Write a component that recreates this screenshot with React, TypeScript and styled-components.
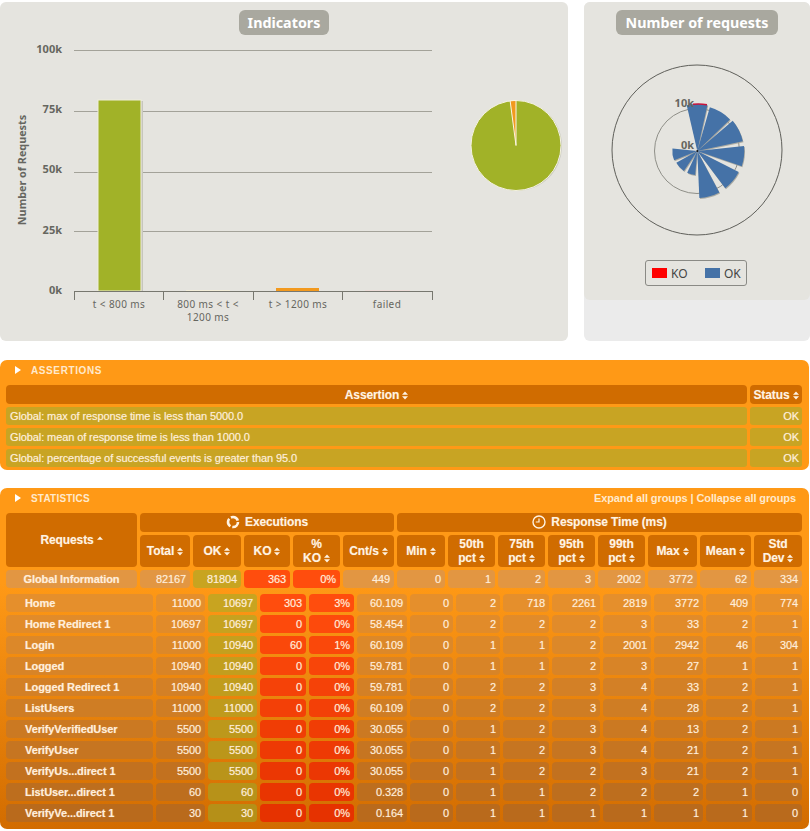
import React from 'react';
import styled, { createGlobalStyle } from 'styled-components';

const GlobalStyle = createGlobalStyle`
  html, body {
    margin: 0;
    background: #ffffff;
    font-family: 'Liberation Sans', Arial, sans-serif;
  }
`;

const Page = styled.div`
  width: 810px;
  height: 831px;
  padding-top: 2px;
  box-sizing: border-box;
  overflow: hidden;
`;

const ChartsRow = styled.div`
  display: flex;
  gap: 16px;
`;

const ChartCard = styled.div<{ $width: number }>`
  width: ${(p) => p.$width}px;
  height: 339px;
  background: #e5e4df;
  border-radius: 6px;
  padding-top: 8px;
  box-sizing: border-box;
  display: flex;
  flex-direction: column;
  align-items: center;
`;

const RequestsCard = styled.div`
  width: 226px;
  height: 339px;
  background: #ebebeb;
  border-radius: 6px;
`;

const RequestsInner = styled.div`
  height: 298px;
  background: #e5e4df;
  border-radius: 6px;
  padding-top: 8px;
  box-sizing: border-box;
  display: flex;
  flex-direction: column;
  align-items: center;
`;

const ChartTitle = styled.div<{ $width: number }>`
  width: ${(p) => p.$width}px;
  height: 25px;
  line-height: 25px;
  flex: none;
  background: #a9a89f;
  border-radius: 6px;
  color: #ffffff;
  text-align: center;
  font-family: 'Noto Sans', sans-serif;
  font-size: 14.3px;
  font-weight: 700;
`;

const ChartSvg = styled.svg`
  display: block;
  flex: none;
  text {
    font-family: 'Noto Sans', sans-serif;
  }
`;

const Legend = styled.div`
  width: 102px;
  height: 26px;
  margin: 5px 2px 0 0;
  border: 1px solid #8a8a85;
  border-radius: 3px;
  box-sizing: border-box;
  display: flex;
  align-items: center;
  padding-left: 6px;
  font-family: 'Noto Sans', sans-serif;
  font-size: 12px;
  color: #444444;
`;

const LegendItem = styled.span`
  display: flex;
  flex: none;
  align-items: center;
  gap: 4px;
  width: 53px;
  &:last-child {
    width: auto;
  }
`;

const LegendSwatch = styled.span<{ $color: string }>`
  width: 15px;
  height: 10px;
  background: ${(p) => p.$color};
`;

const Panel = styled.section<{ $height: number; $top: number; $bg: string }>`
  width: 809px;
  height: ${(p) => p.$height}px;
  margin-top: ${(p) => p.$top}px;
  background: ${(p) => p.$bg};
  border-radius: 7px;
  overflow: hidden;
`;

const TitleBar = styled.div`
  height: 22px;
  padding: 0 13px 2px 15px;
  box-sizing: border-box;
  display: flex;
  align-items: center;
  color: #ffe9cc;
  font-size: 10px;
  font-weight: 700;
`;

const Arrow = styled.span`
  width: 0;
  height: 0;
  margin-right: 10px;
  border-left: 6px solid #ffffff;
  border-top: 4.5px solid transparent;
  border-bottom: 4.5px solid transparent;
`;

const TitleText = styled.span<{ $spacing: number }>`
  letter-spacing: ${(p) => p.$spacing}px;
  flex: 1;
`;

const GroupLinks = styled.span`
  font-size: 11px;
  letter-spacing: -0.1px;
  color: #ffe9cc;
`;

const Table = styled.table`
  margin: 0 3px;
  border-collapse: separate;
  border-spacing: 3px;
  table-layout: fixed;
`;

const Head = styled.th<{ $height?: number }>`
  height: ${(p) => p.$height ?? 19}px;
  padding: 0;
  box-sizing: border-box;
  background: #d06c00;
  border-radius: 4px;
  color: #fff3e2;
  font-size: 12px;
  font-weight: 700;
  letter-spacing: -0.1px;
  line-height: 14px;
  text-align: center;
  text-shadow: 0 0 1px rgba(255, 255, 255, 0.35);
`;

const GroupLabel = styled.span`
  display: inline-flex;
  align-items: center;
  gap: 5px;
  padding: 1px 6px 2px;
  margin: -1px 0;
  background: #d06c00;
  vertical-align: middle;
`;

const Cell = styled.td<{ $fill: string; $name?: boolean }>`
  height: 18px;
  padding: 0 4px 0 ${(p) => (p.$name ? '19px' : '4px')};
  box-sizing: border-box;
  background: ${(p) => p.$fill};
  border-radius: 4px;
  color: #ffeeda;
  font-size: 11px;
  line-height: 13px;
  letter-spacing: -0.1px;
  font-weight: ${(p) => (p.$name ? 700 : 400)};
  text-align: ${(p) => (p.$name ? 'left' : 'right')};
  text-shadow: 0 0 1px rgba(255, 255, 255, 0.45);
  white-space: nowrap;
  overflow: hidden;
`;

const GlobalName = styled(Cell)`
  text-align: center;
  padding: 0;
`;

const AssertionCell = styled.td`
  height: 18px;
  padding: 0 3px 0 4px;
  box-sizing: border-box;
  background: rgba(145, 175, 48, 0.5);
  border-radius: 3px;
  color: #ffeeda;
  font-size: 11px;
  letter-spacing: -0.1px;
  text-shadow: 0 0 1px rgba(255, 255, 255, 0.45);
  &:last-child {
    text-align: right;
  }
`;

const SortIcon = styled.svg`
  width: 6px;
  height: 9px;
  margin-left: 3px;
  vertical-align: -1px;
  fill: #fff3e2;
`;

const Sort = ({ up }: { up?: boolean }) => (
  <SortIcon viewBox="0 0 6 9">
    <path d="M3 0.5 L6 3.8 L0 3.8 Z" />
    {!up && <path d="M3 8.5 L6 5.2 L0 5.2 Z" />}
  </SortIcon>
);

const polar = (cx: number, cy: number, r: number, deg: number) => {
  const a = ((deg - 90) * Math.PI) / 180;
  return [cx + r * Math.cos(a), cy + r * Math.sin(a)];
};

const wedge = (cx: number, cy: number, r: number, from: number, to: number) => {
  const [x1, y1] = polar(cx, cy, r, from);
  const [x2, y2] = polar(cx, cy, r, to);
  return `M${cx} ${cy} L${x1.toFixed(2)} ${y1.toFixed(2)} A${r} ${r} 0 0 1 ${x2.toFixed(2)} ${y2.toFixed(2)} Z`;
};

const IndicatorsChart = () => {
  const grid = [50, 111, 172, 231];
  const ticks = [74, 163, 253, 342, 432];
  const yLabels = [['100k', 53], ['75k', 113], ['50k', 173], ['25k', 234], ['0k', 294]] as const;
  const xLabels = [['t < 800 ms', 119, 308], ['800 ms < t <', 208, 308], ['1200 ms', 208, 321], ['t > 1200 ms', 298, 308], ['failed', 387, 308]] as const;
  return (
    <ChartSvg width={568} height={306} viewBox="0 35 568 306">
      {grid.map((y) => (
        <line key={y} x1={74} x2={432} y1={y + 0.5} y2={y + 0.5} stroke="#a3a299" />
      ))}
      <text x={0} y={0} transform="translate(26 170) rotate(-90)" textAnchor="middle" fontSize={10.8} fontWeight={700} fill="#666660">
        Number of Requests
      </text>
      {yLabels.map(([t, y]) => (
        <text key={t} x={62} y={y} textAnchor="end" fontSize={11} fontWeight={700} fill="#666660">{t}</text>
      ))}
      <rect x={99} y={101} width={44} height={190} fill="#c6c5bd" />
      <rect x={98} y={100} width={43} height={191} fill="#a1b228" stroke="#f0eedb" strokeWidth={1} />
      <rect x={186} y={290} width={44} height={1} fill="#f3eeda" />
      <rect x={276} y={288} width={43} height={3} fill="#f2991e" />
      <rect x={365} y={290} width={45} height={1} fill="#ecdcd8" />
      <line x1={74} x2={432} y1={291.5} y2={291.5} stroke="#77776f" />
      {ticks.map((x) => (
        <line key={x} x1={x + 0.5} x2={x + 0.5} y1={291} y2={300} stroke="#77776f" />
      ))}
      {xLabels.map(([t, x, y]) => (
        <text key={t} x={x} y={y} textAnchor="middle" fontSize={10} letterSpacing={0.4} fill="#666660">{t}</text>
      ))}
      <circle cx={517} cy={146} r={45} fill="#c9c8c0" />
      <circle cx={516} cy={145.5} r={45} fill="#a1b228" stroke="#f5f3e2" strokeWidth={1} />
      <path d={wedge(516, 145.5, 45, -7.5, 0)} fill="#f2991e" stroke="#fbf6e4" strokeWidth={1} />
    </ChartSvg>
  );
};

const spokes = [
  [-13, 12.5, 47], [16, 46, 45.5], [49.5, 78, 46.5], [84, 109, 47], [117, 143, 46.5], [152, 177.5, 47],
  [185, 205, 24], [214, 241, 24], [248, 276, 25],
];

const RequestsChart = () => (
  <ChartSvg width={226} height={220} viewBox="584 35 226 220">
    <circle cx={697} cy={150} r={85} fill="none" stroke="#5f5f5a" strokeWidth={1} />
    <circle cx={697} cy={151} r={42.5} fill="none" stroke="#8f8f88" strokeWidth={1} />
    {spokes.map(([a, b, r]) => (
      <path key={a} d={wedge(698, 152, r, a, b)} fill="#9c9c94" opacity={0.8} />
    ))}
    {spokes.map(([a, b, r]) => (
      <path key={a} d={wedge(697.3, 151, r, a, b)} fill="#4572a7" />
    ))}
    <path d="M693 104.3 A47 47 0 0 1 707 104.8" fill="none" stroke="#c8143c" strokeWidth={1.4} />
    <text x={694} y={107} textAnchor="end" fontSize={11} fontWeight={700} fill="#666660">10k</text>
    <text x={694} y={149} textAnchor="end" fontSize={11} fontWeight={700} fill="#666660">0k</text>
    <circle cx={697.3} cy={151} r={1} fill="#111111" />
  </ChartSvg>
);

const ExecutionsIcon = () => (
  <svg width={14} height={14} viewBox="0 0 14 14">
    <circle cx={7} cy={7} r={5} fill="none" stroke="#fff3e2" strokeWidth={2.6} strokeDasharray="8.4 2" />
  </svg>
);

const ClockIcon = () => (
  <svg width={14} height={14} viewBox="0 0 14 14" fill="none" stroke="#fff3e2">
    <circle cx={7} cy={7} r={6} strokeWidth={1.4} />
    <path d="M7 3.5 V7 H3.8" strokeWidth={1.2} />
  </svg>
);

const headWidths = [131, 50, 48, 46, 47, 51, 48, 47, 47, 47, 47, 49, 51, 48];
const bodyWidths = [147, 49, 49, 46, 45, 50, 43, 44, 46, 48, 48, 49, 46, 47];

const assertions = [
  'Global: max of response time is less than 5000.0',
  'Global: mean of response time is less than 1000.0',
  'Global: percentage of successful events is greater than 95.0',
];

const metricHeads: [string, string?][] = [
  ['Total'], ['OK'], ['KO'], ['%', 'KO'], ['Cnt/s'], ['Min'], ['50th', 'pct'], ['75th', 'pct'],
  ['95th', 'pct'], ['99th', 'pct'], ['Max'], ['Mean'], ['Std', 'Dev'],
];

const globalRow = ['82167', '81804', '363', '0%', '449', '0', '1', '2', '3', '2002', '3772', '62', '334'];

const rows: string[][] = [
  ['Home', '11000', '10697', '303', '3%', '60.109', '0', '2', '718', '2261', '2819', '3772', '409', '774'],
  ['Home Redirect 1', '10697', '10697', '0', '0%', '58.454', '0', '2', '2', '2', '3', '33', '2', '1'],
  ['Login', '11000', '10940', '60', '1%', '60.109', '0', '1', '1', '2', '2001', '2942', '46', '304'],
  ['Logged', '10940', '10940', '0', '0%', '59.781', '0', '1', '1', '2', '3', '27', '1', '1'],
  ['Logged Redirect 1', '10940', '10940', '0', '0%', '59.781', '0', '2', '2', '3', '4', '33', '2', '1'],
  ['ListUsers', '11000', '11000', '0', '0%', '60.109', '0', '2', '2', '3', '4', '28', '2', '1'],
  ['VerifyVerifiedUser', '5500', '5500', '0', '0%', '30.055', '0', '1', '2', '3', '4', '13', '2', '1'],
  ['VerifyUser', '5500', '5500', '0', '0%', '30.055', '0', '1', '2', '3', '4', '21', '2', '1'],
  ['VerifyUs...direct 1', '5500', '5500', '0', '0%', '30.055', '0', '1', '2', '2', '3', '21', '2', '1'],
  ['ListUser...direct 1', '60', '60', '0', '0%', '0.328', '0', '1', '1', '2', '2', '2', '1', '0'],
  ['VerifyVe...direct 1', '30', '30', '0', '0%', '0.164', '0', '1', '1', '1', '1', '1', '1', '0'],
];

type Rgb = [number, number, number];

const shades: Record<string, [Rgb, Rgb]> = {
  plain: [[229, 143, 44], [185, 106, 28]],
  ok: [[200, 164, 32], [181, 144, 24]],
  ko: [[255, 77, 13], [230, 50, 0]],
};

// cells darken row by row along with the panel gradient behind them
const shade = (kind: string, t: number) => {
  const [from, to] = shades[kind];
  const mix = from.map((c, i) => Math.round(c + (to[i] - c) * t));
  return `rgb(${mix.join(', ')})`;
};

const kindFor = (index: number) => {
  if (index === 1) return 'ok';
  if (index === 2 || index === 3) return 'ko';
  return 'plain';
};

const globalFill = (index: number) => (kindFor(index) === 'plain' ? '#e29642' : shade(kindFor(index), 0));

export default function App() {
  return (
    <Page>
      <GlobalStyle />
      <ChartsRow>
        <ChartCard $width={568}>
          <ChartTitle $width={90}>Indicators</ChartTitle>
          <IndicatorsChart />
        </ChartCard>
        <RequestsCard>
          <RequestsInner>
            <ChartTitle $width={162}>Number of requests</ChartTitle>
            <RequestsChart />
            <Legend>
              <LegendItem><LegendSwatch $color="#ff0000" />KO</LegendItem>
              <LegendItem><LegendSwatch $color="#4572a7" />OK</LegendItem>
            </Legend>
          </RequestsInner>
        </RequestsCard>
      </ChartsRow>

      <Panel $height={110} $top={19} $bg="#ff9916">
        <TitleBar>
          <Arrow />
          <TitleText $spacing={0.6}>ASSERTIONS</TitleText>
        </TitleBar>
        <Table>
          <colgroup>
            <col width={741} />
            <col width={52} />
          </colgroup>
          <thead>
            <tr>
              <Head>Assertion<Sort /></Head>
              <Head>Status<Sort /></Head>
            </tr>
          </thead>
          <tbody>
            {assertions.map((text) => (
              <tr key={text}>
                <AssertionCell>{text}</AssertionCell>
                <AssertionCell>OK</AssertionCell>
              </tr>
            ))}
          </tbody>
        </Table>
      </Panel>

      <Panel $height={341} $top={18} $bg="linear-gradient(#ff9916 0%, #ff9916 28%, #d26c00 100%)">
        <TitleBar>
          <Arrow />
          <TitleText $spacing={0.2}>STATISTICS</TitleText>
          <GroupLinks>Expand all groups | Collapse all groups</GroupLinks>
        </TitleBar>
        <Table>
          <colgroup>
            {headWidths.map((w, i) => (
              <col key={i} width={w} />
            ))}
          </colgroup>
          <thead>
            <tr>
              <Head rowSpan={2}>Requests<Sort up /></Head>
              <Head colSpan={5}><GroupLabel><ExecutionsIcon />Executions</GroupLabel></Head>
              <Head colSpan={8}><GroupLabel><ClockIcon />Response Time (ms)</GroupLabel></Head>
            </tr>
            <tr>
              {metricHeads.map(([a, b]) => (
                <Head key={a + b} $height={32}>
                  {b ? <>{a}<br />{b}<Sort /></> : <>{a}<Sort /></>}
                </Head>
              ))}
            </tr>
          </thead>
          <tbody>
            <tr>
              <GlobalName $name $fill="#e29642">Global Information</GlobalName>
              {globalRow.map((v, i) => (
                <Cell key={i} $fill={globalFill(i)}>{v}</Cell>
              ))}
            </tr>
          </tbody>
        </Table>
        <Table>
          <colgroup>
            {bodyWidths.map((w, i) => (
              <col key={i} width={w} />
            ))}
          </colgroup>
          <tbody>
            {rows.map(([name, ...values], r) => (
              <tr key={name}>
                <Cell $name $fill={shade('plain', r / 10)}>{name}</Cell>
                {values.map((v, i) => (
                  <Cell key={i} $fill={shade(kindFor(i), r / 10)}>{v}</Cell>
                ))}
              </tr>
            ))}
          </tbody>
        </Table>
      </Panel>
    </Page>
  );
}
